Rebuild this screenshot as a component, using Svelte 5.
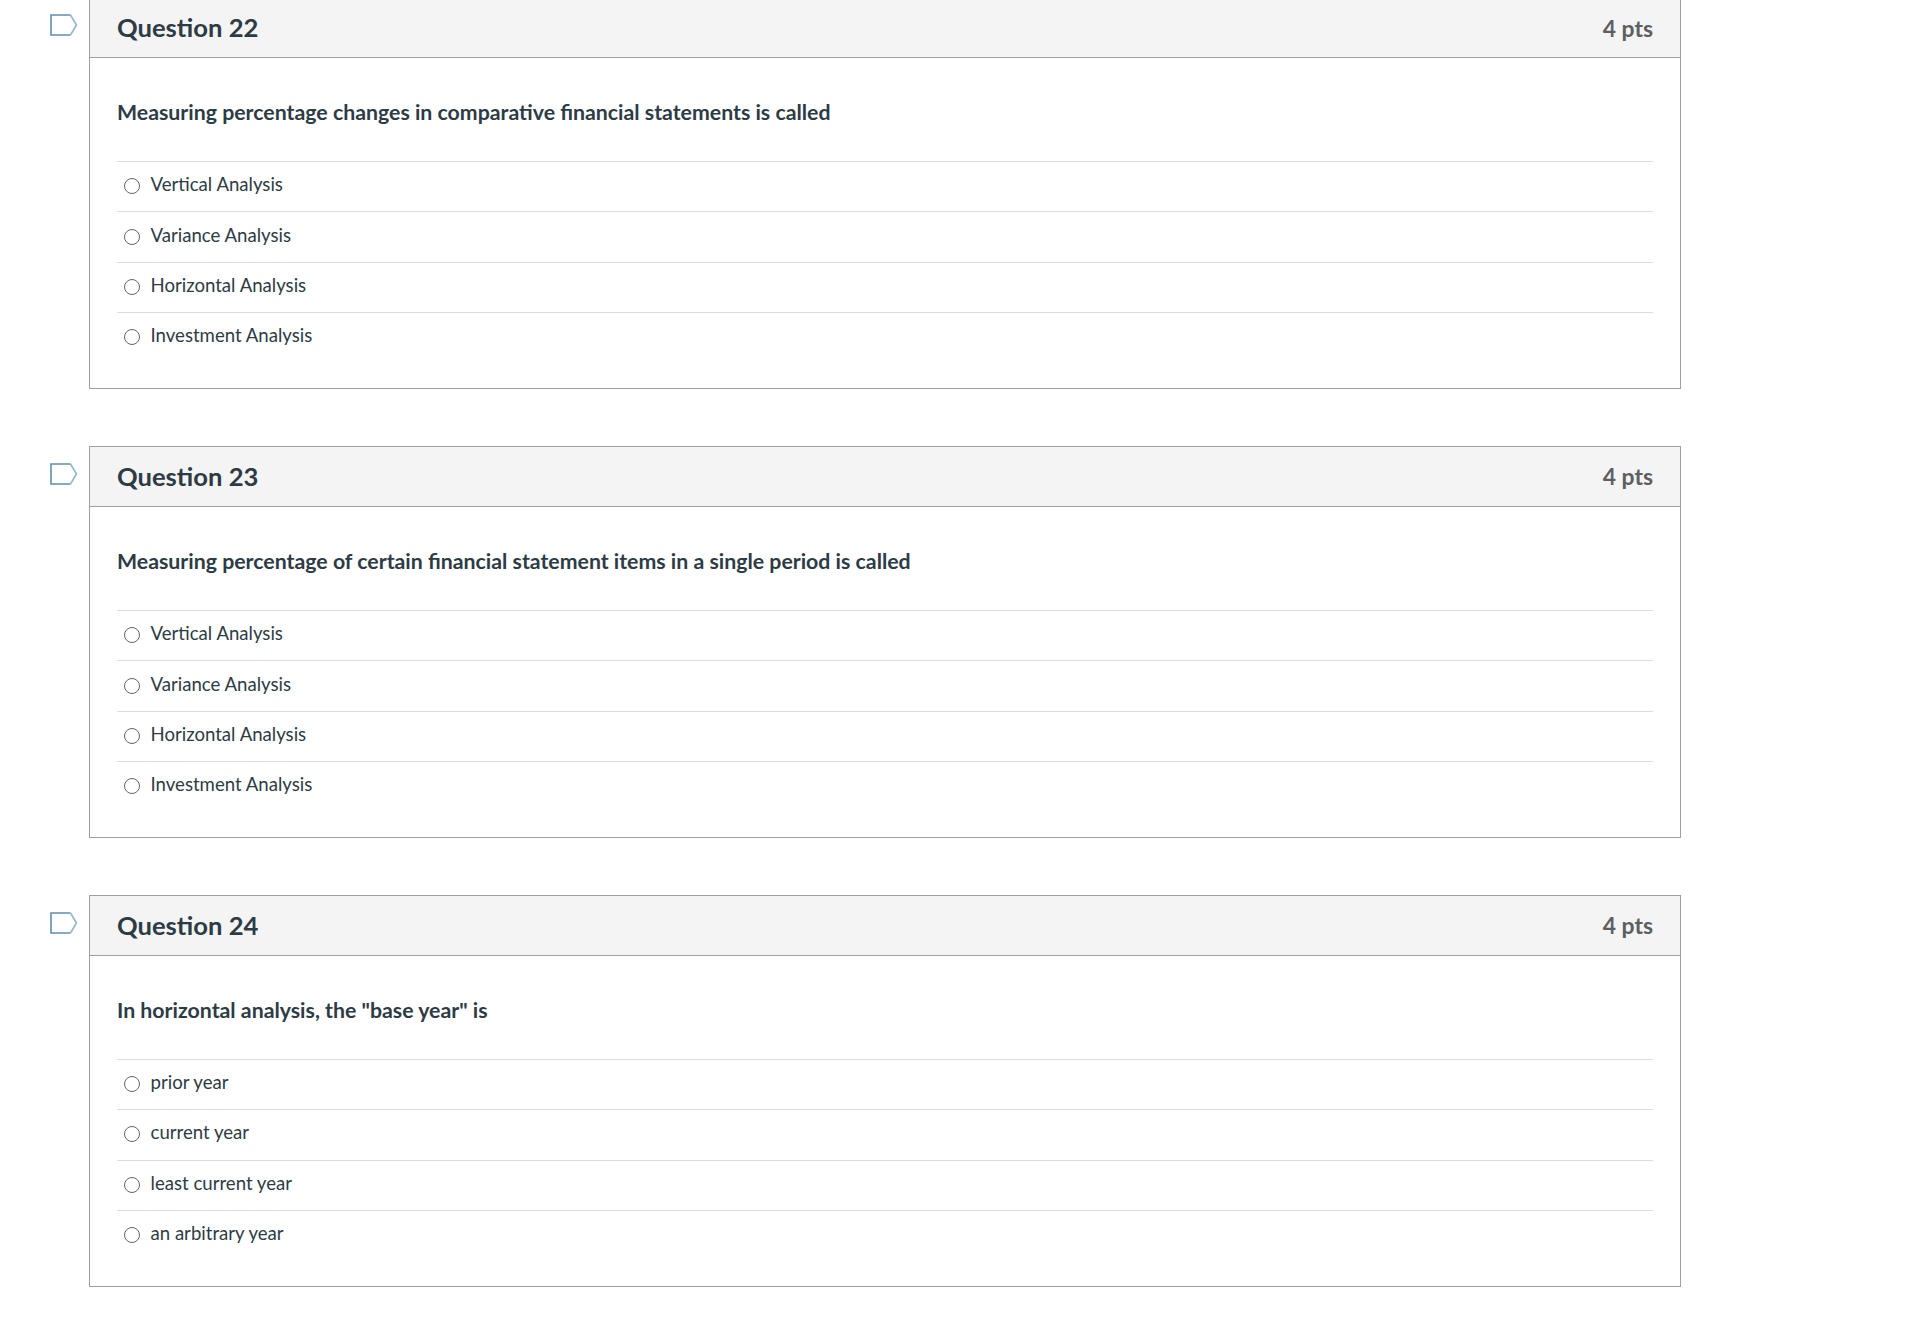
<script>
  const questions = [
    {
      title: "Question 22",
      text: "Measuring percentage changes in comparative financial statements is called",
      answers: ["Vertical Analysis", "Variance Analysis", "Horizontal Analysis", "Investment Analysis"]
    },
    {
      title: "Question 23",
      text: "Measuring percentage of certain financial statement items in a single period is called",
      answers: ["Vertical Analysis", "Variance Analysis", "Horizontal Analysis", "Investment Analysis"]
    },
    {
      title: "Question 24",
      text: 'In horizontal analysis, the "base year" is',
      answers: ["prior year", "current year", "least current year", "an arbitrary year"]
    }
  ];
</script>

<main class="page">
  {#each questions as q}
    <section class="row">
      <div class="flag">
        <svg width="29" height="22" viewBox="0 0 29 22">
          <path class="flag-left" d="M20.5 1H1V21H20.5" />
          <path class="flag-right" d="M20.5 1L26.5 11L20.5 21" />
        </svg>
      </div>
      <div class="card">
        <header>
          <h2>{q.title}</h2>
          <span class="pts">4 pts</span>
        </header>
        <div class="body">
          <p class="text">{q.text}</p>
          <ul>
            {#each q.answers as a}
              <li><span class="radio"></span>{a}</li>
            {/each}
          </ul>
        </div>
      </div>
    </section>
  {/each}
</main>

<style>
:global(body) {
  background: #fff;
}

.page {
  width: 1916px;
  height: 1332px;
  overflow: hidden;
  font-family: Lato, "Liberation Sans", sans-serif;
  color: #2d3b45;
}

.row {
  display: flex;
  margin-top: -3px;
  margin-bottom: 59.9px;
}

.flag {
  width: 89px;
  padding: 17px 0 0 50px;
  box-sizing: border-box;
}

.flag svg {
  display: block;
}

.flag path {
  fill: none;
  stroke-width: 1.6;
}

.flag-left {
  stroke: #5f8eaa;
}

.flag-right {
  stroke: #93b6ca;
}

.card {
  width: 1592px;
  box-sizing: border-box;
  border: 1px solid #a0a0a0;
}

header {
  display: flex;
  justify-content: space-between;
  align-items: center;
  height: 59px;
  padding: 0 27px;
  background: #f4f4f4;
  border-bottom: 1px solid #a0a0a0;
}

h2 {
  margin: 0 0 1px;
  font-size: 25.6px;
  font-weight: 700;
}

.pts {
  font-size: 22.9px;
  font-weight: 700;
  color: #5c5f62;
}

.body {
  padding: 0 27px 25.5px;
}

.text {
  margin: 0;
  height: 103px;
  padding-top: 40px;
  box-sizing: border-box;
  font-size: 21.3px;
  font-weight: 700;
  line-height: 28px;
}

ul {
  list-style: none;
  margin: 0;
  padding: 0;
}

li {
  display: flex;
  align-items: center;
  height: 50.4px;
  box-sizing: border-box;
  border-top: 1px solid #dcdcdc;
  padding-left: 7px;
  font-size: 18.6px;
  padding-bottom: 5px;
}

.radio {
  width: 16px;
  height: 16px;
  box-sizing: border-box;
  margin-right: 10.5px;
  margin-top: 4px;
  border: 1.6px solid #666;
  border-radius: 50%;
}
</style>
